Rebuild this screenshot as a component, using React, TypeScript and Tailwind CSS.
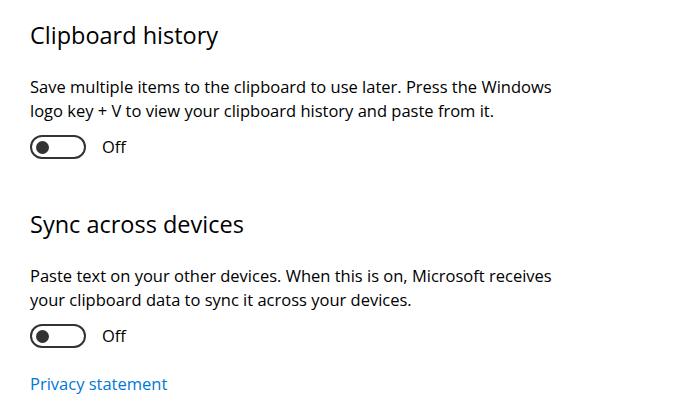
const Toggle = () => (
  <div className="flex items-center gap-[16px]">
    <div className="w-[56px] h-[24px] rounded-full border-2 border-[#333] flex items-center pl-[4px]">
      <span className="w-[13px] h-[13px] rounded-full bg-[#333]" />
    </div>
    <span className="text-[16.5px] text-black">Off</span>
  </div>
);

const Section = ({ title, text }: { title: string; text: string[] }) => (
  <section className="flex flex-col">
    <h2 className="text-[23.5px] leading-[32px] text-black">{title}</h2>
    <p className="mt-[24px] text-[16.5px] leading-[24px] text-black">
      {text.map((line, i) => (
        <span key={i} className="block whitespace-nowrap">{line}</span>
      ))}
    </p>
    <div className="mt-[12px]">
      <Toggle />
    </div>
  </section>
);

export default function App() {
  return (
    <div
      className="w-[699px] h-[412px] bg-white pl-[30px] pt-[19px] flex flex-col gap-[48px]"
      style={{ fontFamily: '"Open Sans", "Noto Sans", sans-serif' }}
    >
      <Section
        title="Clipboard history"
        text={[
          'Save multiple items to the clipboard to use later. Press the Windows',
          'logo key + V to view your clipboard history and paste from it.',
        ]}
      />
      <div className="flex flex-col">
        <Section
          title="Sync across devices"
          text={[
            'Paste text on your other devices. When this is on, Microsoft receives',
            'your clipboard data to sync it across your devices.',
          ]}
        />
        <a className="mt-[23px] text-[16.5px] leading-[24px] text-[#0078d7]">Privacy statement</a>
      </div>
    </div>
  );
}
